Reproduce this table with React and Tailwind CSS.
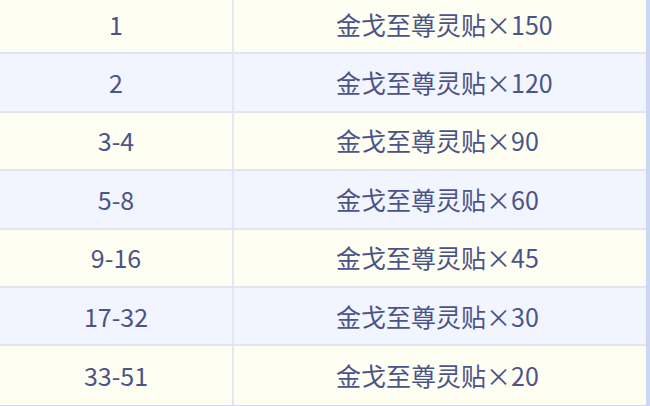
import React from "react";

const rows = [
  ["1", "150"],
  ["2", "120"],
  ["3-4", "90"],
  ["5-8", "60"],
  ["9-16", "45"],
  ["17-32", "30"],
  ["33-51", "20"],
];

export default function App() {
  return (
    <div className="w-[650px] h-[406px] overflow-hidden bg-white">
      <div
        className="w-[650px] -mt-[4px] border-r-[4px] border-b-[3px] border-[#ccd7f5] text-[#4b5488]"
        style={{ fontFamily: '"Noto Sans CJK SC", "Noto Sans", sans-serif' }}
      >
        {rows.map(([rank, n], i) => (
          <div
            key={rank}
            className={`flex h-[58.4px] ${i < rows.length - 1 ? "border-b-2 border-[#dfe5f4]" : ""} ${
              i % 2 === 0 ? "bg-[#fffef2]" : "bg-[#f2f5fd]"
            }`}
          >
            <div className="w-[234px] flex items-center justify-center border-r-2 border-[#e2e7f3] text-[25px] leading-none">
              {rank}
            </div>
            <div className="flex-1 flex items-center pl-[102px] text-[25px] leading-none">
              金戈至尊灵贴×{n}
            </div>
          </div>
        ))}
      </div>
    </div>
  );
}
